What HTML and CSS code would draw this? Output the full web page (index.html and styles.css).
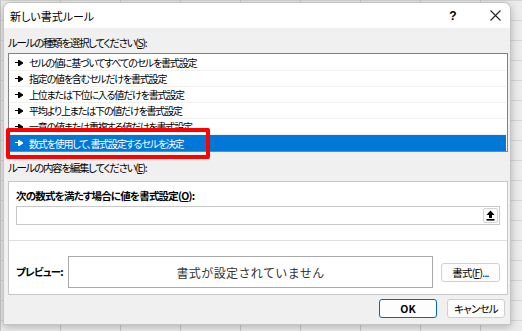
FILE: index.html
```html
<!DOCTYPE html>
<html lang="ja">
<head>
  <meta charset="UTF-8" />
  <title>新しい書式ルール</title>
  <link rel="stylesheet" href="styles.css">
</head>
<body>

  <div class="desktop">
    <div class="dialog">
      <div class="titlebar">
        <span class="title">新しい書式ルール</span>
        <span class="help">?</span>
        <span class="close">
          <svg width="11" height="11" viewBox="0 0 11 11"><path d="M0.5 0.5 L10.5 10.5 M10.5 0.5 L0.5 10.5" stroke="#222" stroke-width="1.1"/></svg>
        </span>
      </div>

      <div class="content">
        <div class="label first">ルールの種類を選択してください(<u>S</u>):</div>

        <div class="rule-list">
          <div class="rule"><svg class="arrow" width="8" height="6" viewBox="0 0 8 6"><path d="M0 2.5 H4 M3.5 0 L8 3 L3.5 6 Z" stroke="#000" fill="#000"/></svg>セルの値に基づいてすべてのセルを書式設定</div>
          <div class="rule"><svg class="arrow" width="8" height="6" viewBox="0 0 8 6"><path d="M0 2.5 H4 M3.5 0 L8 3 L3.5 6 Z" stroke="#000" fill="#000"/></svg>指定の値を含むセルだけを書式設定</div>
          <div class="rule"><svg class="arrow" width="8" height="6" viewBox="0 0 8 6"><path d="M0 2.5 H4 M3.5 0 L8 3 L3.5 6 Z" stroke="#000" fill="#000"/></svg>上位または下位に入る値だけを書式設定</div>
          <div class="rule"><svg class="arrow" width="8" height="6" viewBox="0 0 8 6"><path d="M0 2.5 H4 M3.5 0 L8 3 L3.5 6 Z" stroke="#000" fill="#000"/></svg>平均より上または下の値だけを書式設定</div>
          <div class="rule"><svg class="arrow" width="8" height="6" viewBox="0 0 8 6"><path d="M0 2.5 H4 M3.5 0 L8 3 L3.5 6 Z" stroke="#000" fill="#000"/></svg>一意の値または重複する値だけを書式設定</div>
          <div class="rule selected"><svg class="arrow" width="8" height="6" viewBox="0 0 8 6"><path d="M0 2.5 H4 M3.5 0 L8 3 L3.5 6 Z" stroke="#fff" fill="#fff"/></svg>数式を使用して、書式設定するセルを決定</div>
        </div>

        <div class="label second">ルールの内容を編集してください(<u>E</u>):</div>

        <div class="edit-panel">
          <div class="formula">
            <div class="bold-label">次の数式を満たす場合に値を書式設定(<u>O</u>):</div>
            <div class="formula-input">
              <span class="collapse-btn">
                <svg width="9" height="11" viewBox="0 0 9 11"><path d="M4.5 0.5 L8.5 5 H6 V8 H3 V5 H0.5 Z" fill="#000"/><rect x="0.5" y="9" width="8" height="1.6" fill="#000"/></svg>
              </span>
            </div>
          </div>
          <div class="preview-row">
            <div class="bold-label">プレビュー:</div>
            <div class="preview-box">書式が設定されていません</div>
            <button class="btn format-btn">書式(<u>F</u>)...</button>
          </div>
        </div>

        <div class="actions">
          <button class="btn ok-btn">OK</button>
          <button class="btn">キャンセル</button>
        </div>
      </div>

      <div class="highlight"></div>
    </div>
  </div>

</body>
</html>
```

FILE: styles.css
```css
body {
  margin: 0;
  font-family: "Noto Sans CJK JP", "Noto Sans", sans-serif;
  font-size: 10.5px;
  letter-spacing: -1.3px;
  font-feature-settings: "palt";
  color: #000;
}

.desktop {
  width: 522px;
  height: 331px;
  overflow: hidden;
  background-color: #ececec;
  background-image:
    linear-gradient(to right, #c8c8c8 1px, transparent 1px),
    linear-gradient(to bottom, #d6d6d6 1px, transparent 1px);
  background-size: 60px 20px;
  padding: 2px 0 0 3px;
  box-sizing: border-box;
}

.dialog {
  position: relative;
  width: 508px;
  height: 323px;
  background: #f0f0f0;
  border: 1px solid #c4c4c4;
  border-radius: 7px 7px 0 0;
  box-shadow: 0 2px 8px rgba(0, 0, 0, 0.25);
  box-sizing: border-box;
}

.titlebar {
  height: 25px;
  background: white;
  border-radius: 7px 7px 0 0;
  display: flex;
  align-items: center;
  padding-left: 6px;
}

.title {
  flex: 1;
  font-size: 11px;
  letter-spacing: 0;
}

.help {
  font-family: "Liberation Sans", sans-serif;
  font-size: 12px;
  font-weight: bold;
  letter-spacing: 0;
  width: 20px;
  text-align: center;
  margin-right: 17px;
}

.close {
  width: 30px;
  display: flex;
  justify-content: center;
}

.content {
  padding: 0 2px 0 4px;
}

.label {
  height: 14px;
  line-height: 14px;
  white-space: nowrap;
}

.label.first {
  margin-top: 8px;
  margin-bottom: 3px;
}

.label.second {
  margin-top: 9px;
  margin-bottom: 6px;
}

.rule-list {
  background: white;
  border: 1px solid #828282;
  padding: 1px;
  box-sizing: border-box;
  height: 99px;
}

.rule {
  height: 15px;
  line-height: 15px;
  font-size: 10px;
  letter-spacing: -1.2px;
  border-bottom: 1px solid #f0f0f0;
  padding-left: 5px;
  display: flex;
  align-items: center;
  white-space: nowrap;
}

.rule .arrow {
  margin-right: 6px;
}

.rule.selected {
  background: #0078d7;
  color: white;
  border-bottom: none;
  height: 16px;
}

.edit-panel {
  background: white;
  border: 1px solid #c8c8c8;
  height: 114px;
  box-sizing: border-box;
}

.formula {
  padding: 7px 7px 0;
  height: 59px;
  border-bottom: 1px solid #dedede;
  box-sizing: border-box;
}

.bold-label {
  font-weight: bold;
  letter-spacing: -0.8px;
  height: 14px;
  line-height: 14px;
  white-space: nowrap;
}

.formula-input {
  margin-top: 3px;
  height: 19px;
  border: 1px solid #c8c8c8;
  box-sizing: border-box;
  display: flex;
  justify-content: flex-end;
  align-items: center;
  padding-right: 1px;
}

.collapse-btn {
  width: 15px;
  height: 15px;
  border: 1px solid #d4d4d4;
  border-radius: 2px;
  background: #fafafa;
  display: flex;
  align-items: center;
  justify-content: center;
  box-sizing: border-box;
}

.preview-row {
  display: flex;
  align-items: center;
  padding: 15px 7px 0;
}

.preview-row .bold-label {
  width: 52px;
}

.preview-box {
  width: 365px;
  height: 32px;
  border: 1px solid #a8a8a8;
  box-sizing: border-box;
  display: flex;
  align-items: center;
  justify-content: center;
  font-size: 12px;
  font-feature-settings: normal;
  color: #333;
  letter-spacing: 0.4px;
}

.btn {
  font-family: "Noto Sans CJK JP", "Noto Sans", sans-serif;
  font-size: 10.5px;
  letter-spacing: -0.8px;
  font-feature-settings: "palt";
  background: #fdfdfd;
  border: 1px solid #d0d0d0;
  border-radius: 3px;
  height: 19px;
  padding: 0;
  color: #000;
  line-height: 15px;
}

.format-btn {
  flex: none;
  width: 59px;
  margin-left: 8px;
}

.actions {
  display: flex;
  justify-content: flex-end;
  gap: 10px;
  margin-top: 4px;
  padding-right: 3px;
}

.actions .btn {
  flex: none;
  width: 58px;
}

.ok-btn {
  border: 1px solid #0067c0;
  font-weight: bold;
  letter-spacing: 0;
}

.highlight {
  position: absolute;
  left: 2px;
  top: 125px;
  width: 204px;
  height: 31px;
  border: 4px solid #ff0000;
  border-radius: 2px;
  box-sizing: border-box;
}
```
